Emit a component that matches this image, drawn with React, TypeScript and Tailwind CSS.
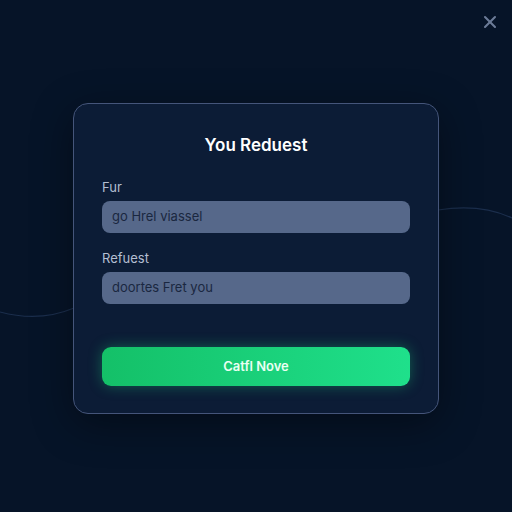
import { X } from 'lucide-react';

const font = { fontFamily: 'Inter, "Liberation Sans", Arial, sans-serif' };

function Field({ label, value }: { label: string; value: string }) {
  return (
    <div className="flex flex-col">
      <label className="text-[13px] leading-4 text-[#b4bfd2]">{label}</label>
      <div className="mt-[6px] flex h-[32px] items-center rounded-[8px] bg-[#56688a] px-[10px] text-[13px] text-[#1a2740]">
        {value}
      </div>
    </div>
  );
}

export default function App() {
  return (
    <div
      className="relative flex h-[512px] w-[512px] items-start justify-center overflow-hidden bg-[#061428]"
      style={font}
    >
      {/* faint background curves */}
      <svg className="absolute inset-0" width="512" height="512" viewBox="0 0 512 512" fill="none">
        <path d="M0 312 C 30 320, 55 316, 74 308" stroke="#1b2e4c" strokeWidth="1.2" />
        <path d="M438 210 C 470 205, 495 210, 512 218" stroke="#1b2e4c" strokeWidth="1.2" />
      </svg>

      <button className="absolute right-[12px] top-[12px] text-[#6b7b97]">
        <X className="h-[20px] w-[20px]" strokeWidth={2.5} />
      </button>

      <div className="relative mt-[103px] flex h-[311px] w-[366px] flex-col rounded-[15px] border border-[#45557a] bg-[#0c1c36] px-[28px] pt-[31px] shadow-[0_10px_40px_rgba(0,0,0,0.4)]">
        <h2 className="text-center text-[17px] font-semibold leading-5 text-white">You Reduest</h2>

        <div className="mt-[24px] flex flex-col gap-[17px]">
          <Field label="Fur" value="go Hrel viassel" />
          <Field label="Refuest" value="doortes Fret you" />
        </div>

        <button className="mt-[43px] flex h-[39px] items-center justify-center rounded-[9px] bg-gradient-to-r from-[#14c068] to-[#1fe08b] text-[13px] font-semibold text-[#eafff3] shadow-[0_0_14px_rgba(30,220,130,0.35)]">
          Catfl Nove
        </button>
      </div>
    </div>
  );
}
